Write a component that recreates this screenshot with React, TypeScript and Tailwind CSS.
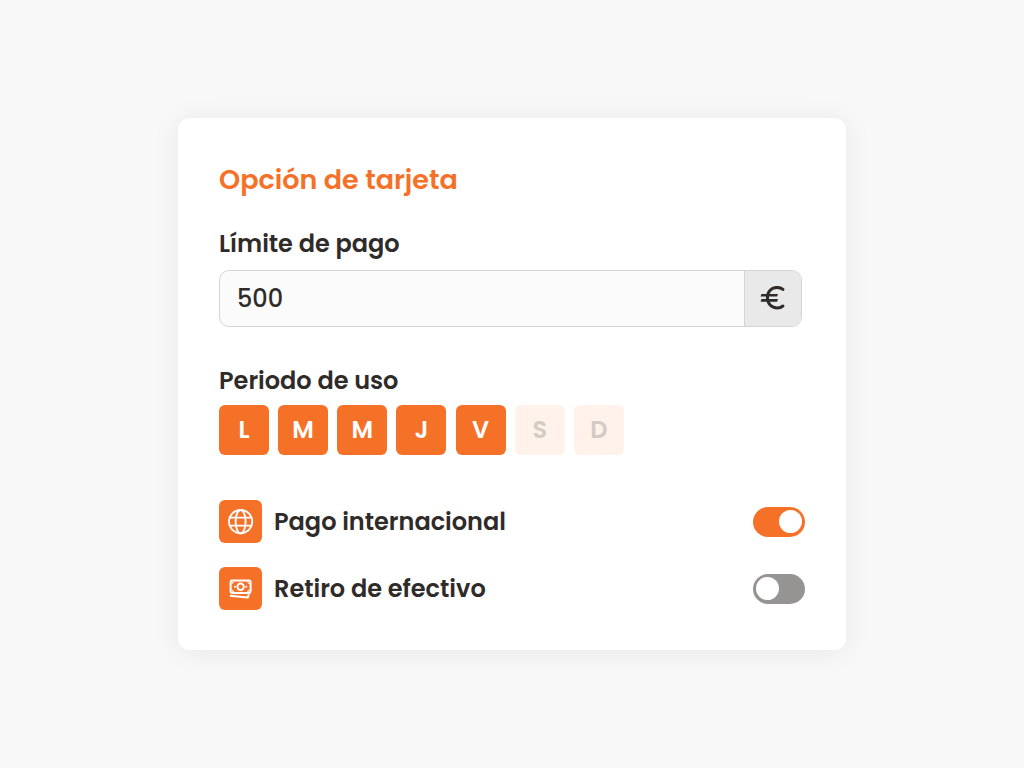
import { useState } from 'react'
import type { ReactNode } from 'react'
import clsx from 'clsx'

const weekDays = [
  { id: 'lunes', letter: 'L' },
  { id: 'martes', letter: 'M' },
  { id: 'miercoles', letter: 'M' },
  { id: 'jueves', letter: 'J' },
  { id: 'viernes', letter: 'V' },
  { id: 'sabado', letter: 'S' },
  { id: 'domingo', letter: 'D' },
]

function GlobeIcon() {
  return (
    <svg
      viewBox="0 0 26 26"
      className="size-[26px]"
      fill="none"
      stroke="currentColor"
      strokeWidth="1.9"
      aria-hidden="true"
    >
      <circle cx="12.6" cy="12.6" r="11.6" />
      <ellipse cx="12.6" cy="12.6" rx="5" ry="11.6" />
      <path d="M2 8.6h21.2M2 16.6h21.2" />
    </svg>
  )
}

function CashIcon() {
  return (
    <svg
      viewBox="0 0 26 26"
      className="size-[26px]"
      fill="none"
      stroke="currentColor"
      strokeWidth="2"
      strokeLinejoin="round"
      aria-hidden="true"
    >
      <rect x="2.6" y="4.6" width="20" height="12.4" rx="1.4" />
      <circle cx="12.6" cy="10.8" r="3.2" />
      <path
        d="M3.6 7.8 5.8 5.6M19.4 5.6 21.6 7.8M3.6 13.8 5.8 16M19.4 16 21.6 13.8"
        strokeWidth="1.2"
      />
      <circle cx="6.9" cy="10.8" r="1" fill="currentColor" stroke="none" />
      <circle cx="18.3" cy="10.8" r="1" fill="currentColor" stroke="none" />
      <path d="M1.9 19.7C8 20.2 14 20.8 19.8 21.6L20.9 18.2" strokeWidth="2" />
    </svg>
  )
}

function EuroIcon() {
  return (
    <svg
      viewBox="0 0 26 26"
      className="size-[26px]"
      fill="none"
      stroke="currentColor"
      aria-hidden="true"
    >
      <path
        d="M22.9 3.4C21.4 2.1 19.6 1.4 17.2 1.4 11.4 1.4 7.4 5.8 7.4 11.7S11.4 22 17.2 22c2.4 0 4.2-.7 5.7-2"
        strokeWidth="3"
        strokeLinecap="round"
      />
      <path
        d="M1.4 7.9H18L17.1 10.6H.6ZM1.4 13H18L17.1 15.7H.6Z"
        fill="currentColor"
        stroke="none"
      />
    </svg>
  )
}

type OptionRowProps = {
  id: string
  label: string
  icon: ReactNode
  defaultChecked?: boolean
}

function OptionRow({ id, label, icon, defaultChecked }: OptionRowProps) {
  return (
    <div className="flex items-center gap-3">
      <span className="flex size-[43px] shrink-0 items-center justify-center rounded-md bg-[#f57128] text-white">
        {icon}
      </span>
      <label htmlFor={id} className="grow text-2xl font-semibold">
        {label}
      </label>
      <input
        id={id}
        type="checkbox"
        role="switch"
        defaultChecked={defaultChecked}
        className="flex h-[30px] w-[52px] shrink-0 cursor-pointer appearance-none items-center rounded-full bg-[#969492] px-[3px] before:size-[23px] before:rounded-full before:bg-white checked:justify-end checked:bg-[#f57128]"
      />
    </div>
  )
}

export default function App() {
  const [limit, setLimit] = useState('500')
  const [active, setActive] = useState(['lunes', 'martes', 'miercoles', 'jueves', 'viernes'])

  const toggleDay = (id: string) =>
    setActive((days) => (days.includes(id) ? days.filter((d) => d !== id) : [...days, id]))

  return (
    <main className="flex min-h-screen items-center justify-center bg-[#f8f8f8] p-4 font-['Poppins','Inter',sans-serif] text-[#2f2b29]">
      <form className="w-full max-w-[668px] rounded-xl bg-white px-[41px] py-10 shadow-[0_2px_28px_rgba(0,0,0,0.07)]">
        <h1 className="text-[27px] leading-[44px] font-semibold text-[#f57128]">
          Opción de tarjeta
        </h1>

        <div className="mt-[26px] mr-[3px] flex flex-col gap-[10px]">
          <label htmlFor="limite" className="text-2xl font-semibold">
            Límite de pago
          </label>
          <div className="flex h-[57px] overflow-hidden rounded-[10px] border border-[#d4d4d4] bg-[#fbfbfb]">
            <input
              id="limite"
              type="text"
              inputMode="numeric"
              value={limit}
              onChange={(e) => setLimit(e.target.value)}
              className="min-w-0 grow px-[17px] text-2xl font-medium outline-none"
            />
            <span className="flex w-[57px] shrink-0 items-center justify-center border-l border-[#d4d4d4] bg-[#e9e9e9]">
              <EuroIcon />
            </span>
          </div>
        </div>

        <fieldset className="mt-[38px]">
          <legend className="text-2xl font-semibold">Periodo de uso</legend>
          <div className="mt-2 flex max-w-[405px] flex-wrap justify-between gap-y-2">
            {weekDays.map((day) => (
              <button
                key={day.id}
                type="button"
                aria-pressed={active.includes(day.id)}
                onClick={() => toggleDay(day.id)}
                className={clsx(
                  'size-[50px] rounded-md text-2xl font-semibold',
                  active.includes(day.id)
                    ? 'bg-[#f57128] text-white'
                    : 'bg-[#fff2ea] text-[#d5cbc4]',
                )}
              >
                {day.letter}
              </button>
            ))}
          </div>
        </fieldset>

        <div className="mt-[45px] flex flex-col gap-6">
          <OptionRow
            id="internacional"
            label="Pago internacional"
            icon={<GlobeIcon />}
            defaultChecked
          />
          <OptionRow id="efectivo" label="Retiro de efectivo" icon={<CashIcon />} />
        </div>
      </form>
    </main>
  )
}
